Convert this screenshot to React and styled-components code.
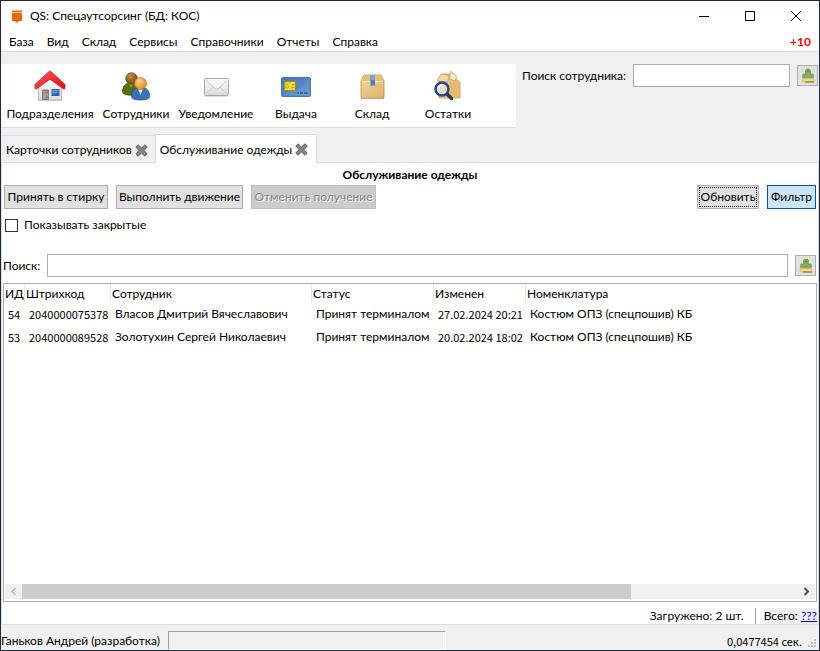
import React, { useState } from 'react';
import styled, { createGlobalStyle, css } from 'styled-components';

const menuItems = ['База', 'Вид', 'Склад', 'Сервисы', 'Справочники', 'Отчеты', 'Справка'];

const rows = [
  {
    id: 54,
    barcode: '2040000075378',
    employee: 'Власов Дмитрий Вячеславович',
    status: 'Принят терминалом',
    changed: '27.02.2024 20:21',
    item: 'Костюм ОПЗ (спецпошив) КБ',
  },
  {
    id: 53,
    barcode: '2040000089528',
    employee: 'Золотухин Сергей Николаевич',
    status: 'Принят терминалом',
    changed: '20.02.2024 18:02',
    item: 'Костюм ОПЗ (спецпошив) КБ',
  },
];

const HouseIcon = () => (
  <svg width="32" height="32" viewBox="0 0 32 32" aria-hidden="true">
    <defs>
      <linearGradient id="wall" x1="0" y1="0" x2="0" y2="1">
        <stop offset="0" stopColor="#fff" />
        <stop offset="1" stopColor="#dcdcdc" />
      </linearGradient>
      <linearGradient id="roof" x1="0" y1="0" x2="1" y2="1">
        <stop offset="0" stopColor="#f55" />
        <stop offset="1" stopColor="#d80f16" />
      </linearGradient>
    </defs>
    <ellipse cx="16" cy="30" rx="14" ry="1.5" fill="#0002" />
    <path d="M4.500 14 16 5l11.500 9v16h-23z" fill="url(#wall)" stroke="#aaa" strokeWidth=".8" />
    <path d="M8.500 20h6v9.500h-6z" fill="#8a8c85" stroke="#6c6e68" strokeWidth=".8" />
    <path d="M9.500 21h2v8h-2z" fill="#a5a7a0" />
    <circle cx="13.500" cy="25" r=".9" fill="#ddb94b" />
    <path d="M17 18.500h9v8h-9z" fill="#e8eaed" />
    <path d="M17.500 19h8v7h-8z" fill="#2f62a8" />
    <path d="M18.500 20h6v2.500l-6 2z" fill="#5b8fd0" />
    <path
      d="M16 1.300c.6 0 1 .2 1.400.6L30.600 14c.8.8.5 3 .2 4.500-.2.900-1 .7-1.600.2L16 9.200 2.800 18.700c-.6.5-1.400.7-1.600-.2-.3-1.500-.6-3.700.2-4.500L14.600 1.900c.4-.4.8-.6 1.400-.6z"
      fill="url(#roof)"
      stroke="#c4161c"
      strokeWidth=".7"
    />
  </svg>
);

const UsersIcon = () => (
  <svg width="32" height="32" viewBox="0 0 32 32" aria-hidden="true">
    <defs>
      <radialGradient id="skinBack" cx=".4" cy=".3" r=".7">
        <stop offset="0" stopColor="#c58e45" />
        <stop offset="1" stopColor="#764708" />
      </radialGradient>
      <radialGradient id="skinFront" cx=".4" cy=".3" r=".7">
        <stop offset="0" stopColor="#ffd391" />
        <stop offset="1" stopColor="#e08a17" />
      </radialGradient>
    </defs>
    <path d="M2.500 22c0-6 2.500-9 8-9s8 3 8 9c0 2-3.500 3.200-8 3.200S2.500 24 2.500 22z" fill="#53700c" stroke="#405608" strokeWidth=".7" />
    <path d="M8.500 13.500 11 18l3-4.500z" fill="#85994f" />
    <circle cx="11.500" cy="8.500" r="5.800" fill="url(#skinBack)" stroke="#6b420c" strokeWidth=".7" />
    <path d="M11.500 26.500c0-6 2.500-9 9-9s9 3 9 9c0 2.500-3.500 3.500-9 3.500s-9-1-9-3.500z" fill="#3a72b8" stroke="#204a87" strokeWidth=".7" />
    <path d="m18 18.500 2.500 6.500 2.500-6.500z" fill="#eef3f8" />
    <circle cx="20.500" cy="13.500" r="6" fill="url(#skinFront)" stroke="#bd6d0c" strokeWidth=".7" />
  </svg>
);

const MailIcon = () => (
  <svg width="32" height="32" viewBox="0 0 32 32" aria-hidden="true">
    <defs>
      <linearGradient id="paper" x1="0" y1="0" x2="0" y2="1">
        <stop offset="0" stopColor="#fff" />
        <stop offset="1" stopColor="#d8dad6" />
      </linearGradient>
    </defs>
    <path d="M4.500 26h24" stroke="#0002" strokeWidth="2" />
    <rect x="4.500" y="8.500" width="24" height="17" rx="1" fill="url(#paper)" stroke="#a6a8a4" />
    <path d="m6 24 8-8m13 8-8-8" stroke="#c6c8c4" strokeWidth=".8" fill="none" />
    <path d="m5.500 10 8.500 8c1.600 1.400 3.400 1.400 5 0l8.500-8" stroke="#bbbdb9" strokeWidth=".8" fill="#f4f4f3" />
  </svg>
);

const CardIcon = () => (
  <svg width="32" height="32" viewBox="0 0 32 32" aria-hidden="true">
    <defs>
      <linearGradient id="card" x1="0" y1="0" x2="1" y2="1">
        <stop offset="0" stopColor="#4177b2" />
        <stop offset="1" stopColor="#6598ce" />
      </linearGradient>
    </defs>
    <rect x="1.500" y="7.500" width="29" height="19" rx="1.500" fill="url(#card)" stroke="#4a78ab" />
    <path d="M3 24c9-2 18-6 26-14v15H3z" fill="#fff1" />
    <rect x="4.500" y="11.500" width="11" height="9" rx="1" fill="#efd02f" stroke="#a88f1e" />
    <path d="M5 14.500h3m-3 3h4m2-3h4m-4 3h4" stroke="#c9a51c" strokeWidth=".8" />
    <path d="m8 20 5-8" stroke="#f8e67c" />
    <path d="M17 23h2m1 0h3m1 0h4" stroke="#1f3a5f" />
  </svg>
);

const BoxIcon = () => (
  <svg width="32" height="32" viewBox="0 0 32 32" aria-hidden="true">
    <defs>
      <linearGradient id="box" x1="0" y1="0" x2="1" y2="1">
        <stop offset="0" stopColor="#f5d79f" />
        <stop offset="1" stopColor="#dfb269" />
      </linearGradient>
    </defs>
    <path d="M5 28.500h23" stroke="#0003" strokeWidth="1.500" />
    <path d="M5 11 8 5h17l3 6v17H5z" fill="url(#box)" stroke="#b98b43" strokeWidth=".8" />
    <path d="M5.500 11h22L25 5.500H8z" fill="#e5bd7a" />
    <path d="M6 11.500h21" stroke="#fae9c8" />
    <path d="M14.500 5h4.500v11.500l-2.200-1.500-2.300 1.500z" fill="#4d7fbe" />
    <path d="M14.500 5h4.500v5h-4.500z" fill="#7ba5d8" />
  </svg>
);

const BoxSearchIcon = () => (
  <svg width="32" height="32" viewBox="0 0 32 32" aria-hidden="true">
    <path d="m7 10 3-6h9l6 6 3 2v16H7z" fill="#e9c487" stroke="#c79a55" strokeWidth=".8" />
    <path d="m5 11 4-7 8 1.500L15.500 12z" fill="#f3d7a6" stroke="#c79a55" strokeWidth=".7" />
    <path d="m17.500 9 .8-8 6.200 5-1 5z" fill="#f8e7c8" stroke="#c79a55" strokeWidth=".7" />
    <path d="m18 12 8-1 1.600 2v14.600H18z" fill="#e3b973" />
    <path d="m15 24 4.500 4.500" stroke="#333b48" strokeWidth="3.500" strokeLinecap="round" />
    <circle cx="10" cy="19" r="6.500" fill="#e9dccb" stroke="#27468f" strokeWidth="2.500" />
    <path d="M6.300 18.500c.5-2.300 2-3.500 4.200-3.500" stroke="#fff" strokeWidth="1.500" fill="none" />
  </svg>
);

const BrushIcon = () => (
  <svg width="16" height="16" viewBox="0 0 16 16" aria-hidden="true">
    <path d="M5.500 3c0-1.300 1-1.800 2.500-1.800s2.500.5 2.500 1.800L10 6h2c1 0 1.500.5 1.500 1.500V8.500h-11V7.500C2.500 6.500 3 6 4 6h2z" fill="#83b548" stroke="#659a34" strokeWidth=".8" />
    <circle cx="8" cy="3.400" r=".8" fill="#40691d" />
    <path d="M2.200 8h11.600v2.500H2.200z" fill="#929a8c" />
    <path d="M2.500 10.500h11.200l.3 3.500H2z" fill="#ecdc7c" stroke="#cdb65c" strokeWidth=".6" />
    <path d="M5 14h9" stroke="#7d6529" />
  </svg>
);

const CrossIcon = () => (
  <svg width="13" height="13" viewBox="0 0 13 13" aria-hidden="true">
    <path
      d="M3 .8 6.500 4 10 .8 12.200 3 9 6.500l3.200 3.500L10 12.200 6.500 9 3 12.200.8 10 4 6.500.8 3z"
      fill="#858585"
      stroke="#5f5f5f"
      strokeLinejoin="round"
    />
  </svg>
);

const tools = [
  { label: 'Подразделения', Icon: HouseIcon, width: 96 },
  { label: 'Сотрудники', Icon: UsersIcon, width: 76 },
  { label: 'Уведомление', Icon: MailIcon, width: 84 },
  { label: 'Выдача', Icon: CardIcon, width: 76 },
  { label: 'Склад', Icon: BoxIcon, width: 76 },
  { label: 'Остатки', Icon: BoxSearchIcon, width: 76 },
];

const App = () => {
  const [employee, setEmployee] = useState('');
  const [search, setSearch] = useState('');
  const [showClosed, setShowClosed] = useState(false);

  return (
    <Window>
      <GlobalStyle />
      <TitleBar>
        <svg width="12" height="13" viewBox="0 0 12 13" aria-hidden="true">
          <path d="M1 .5h10V2H1zM1 2.800h10V10c0 .6-.3 1-1 1H8l-2 2-2-2H2c-.7 0-1-.4-1-1z" fill="#ec6608" />
        </svg>
        <h1>QS: Спецаутсорсинг (БД: КОС)</h1>
        <WindowBtn aria-label="Свернуть">
          <svg width="12" height="12" viewBox="0 0 12 12">
            <path d="M1 6.500h10" stroke="#000" />
          </svg>
        </WindowBtn>
        <WindowBtn aria-label="Развернуть">
          <svg width="12" height="12" viewBox="0 0 12 12">
            <path d="M1.500 1.500h9v9h-9z" stroke="#000" fill="none" />
          </svg>
        </WindowBtn>
        <WindowBtn aria-label="Закрыть">
          <svg width="12" height="12" viewBox="0 0 12 12">
            <path d="m1 1 10 10M11 1 1 11" stroke="#000" />
          </svg>
        </WindowBtn>
      </TitleBar>

      <MenuBar>
        {menuItems.map(name => (
          <button key={name}>{name}</button>
        ))}
        <Counter>+10</Counter>
      </MenuBar>

      <TopArea>
        <ToolBar>
          {tools.map(({ label, Icon, width }) => (
            <ToolBtn key={label} $width={width}>
              <Icon />
              {label}
            </ToolBtn>
          ))}
        </ToolBar>
        <EmployeeSearch>
          <label htmlFor="employee">Поиск сотрудника:</label>
          <TextInput id="employee" value={employee} onChange={e => setEmployee(e.target.value)} />
          <IconBtn aria-label="Очистить поиск сотрудника" onClick={() => setEmployee('')}>
            <BrushIcon />
          </IconBtn>
        </EmployeeSearch>
      </TopArea>

      <Tabs>
        <Tab>
          <button>Карточки сотрудников</button>
          <button aria-label="Закрыть вкладку">
            <CrossIcon />
          </button>
        </Tab>
        <Tab $active>
          <button>Обслуживание одежды</button>
          <button aria-label="Закрыть вкладку">
            <CrossIcon />
          </button>
        </Tab>
      </Tabs>

      <Page>
        <h2>Обслуживание одежды</h2>
        <Actions>
          <Btn $width={104}>Принять в стирку</Btn>
          <Btn $width={127}>Выполнить движение</Btn>
          <Btn $width={125} disabled>
            Отменить получение
          </Btn>
          <Spacer />
          <Btn $width={62} $focused>
            Обновить
          </Btn>
          <Btn $width={49} $pressed>
            Фильтр
          </Btn>
        </Actions>
        <CheckLabel>
          <input type="checkbox" checked={showClosed} onChange={e => setShowClosed(e.target.checked)} />
          Показывать закрытые
        </CheckLabel>
        <SearchRow>
          <label htmlFor="search">Поиск:</label>
          <TextInput id="search" value={search} onChange={e => setSearch(e.target.value)} />
          <IconBtn aria-label="Очистить поиск" onClick={() => setSearch('')}>
            <BrushIcon />
          </IconBtn>
        </SearchRow>

        <ListBox>
          <Table>
            <colgroup>
              <Col $width={21} />
              <Col $width={86} />
              <Col $width={201} />
              <Col $width={122} />
              <Col $width={92} />
              <col />
            </colgroup>
            <thead>
              <tr>
                <th>ИД</th>
                <th>Штрихкод</th>
                <th>Сотрудник</th>
                <th>Статус</th>
                <th>Изменен</th>
                <th>Номенклатура</th>
              </tr>
            </thead>
            <tbody>
              {rows.map(row => (
                <tr key={row.id}>
                  <NumCell>{row.id}</NumCell>
                  <NumCell>{row.barcode}</NumCell>
                  <td>{row.employee}</td>
                  <td>{row.status}</td>
                  <NumCell>{row.changed}</NumCell>
                  <td>{row.item}</td>
                </tr>
              ))}
            </tbody>
          </Table>
          <ScrollBar>
            <button aria-label="Влево" disabled>
              <svg width="7" height="9" viewBox="0 0 7 9">
                <path d="M5.500 1 2 4.500 5.500 8" stroke="#b5b5b5" strokeWidth="1.500" fill="none" />
              </svg>
            </button>
            <Track>
              <Thumb />
            </Track>
            <button aria-label="Вправо">
              <svg width="7" height="9" viewBox="0 0 7 9">
                <path d="M1.500 1 5 4.500 1.500 8" stroke="#505050" strokeWidth="2" fill="none" />
              </svg>
            </button>
          </ScrollBar>
        </ListBox>

        <Totals>
          <span>Загружено: 2 шт.</span>
          <Total>
            Всего: <a href="#total">???</a>
          </Total>
        </Totals>
      </Page>

      <StatusBar>
        <span>Ганьков Андрей (разработка)</span>
        <StatusPanel />
        <Elapsed>0,0477454 сек.</Elapsed>
        <svg width="8" height="8" viewBox="0 0 8 8" aria-hidden="true">
          <path d="M6 0h2v2H6zM3 3h2v2H3zM6 3h2v2H6zM0 6h2v2H0zM3 6h2v2H3zM6 6h2v2H6z" fill="#bfbfbf" />
        </svg>
      </StatusBar>
    </Window>
  );
};

const GlobalStyle = createGlobalStyle`
  * {
    box-sizing: border-box;
  }

  body {
    margin: 0;
    color: #000;
    background: #f0f0f0;
    font: 12px/16px Lato, 'Open Sans', sans-serif;
  }

  h1, h2 {
    margin: 0;
    font-size: 12px;
  }

  button, input {
    margin: 0;
    padding: 0;
    border: 0;
    border-radius: 0;
    color: inherit;
    background: none;
    font: inherit;
    white-space: nowrap;
  }

  svg {
    display: block;
    flex: none;
  }
`;

const numberFont = css`
  font-family: 'Noto Sans CJK SC', 'Open Sans', sans-serif;
  font-size: 11px;
`;

const Window = styled.div`
  display: flex;
  flex-direction: column;
  min-height: 100vh;
  border: 1px solid #1b2a41;
  white-space: nowrap;
`;

const TitleBar = styled.header`
  display: flex;
  align-items: center;
  height: 30px;
  padding-left: 10px;
  background: #fff;

  h1 {
    flex: 1;
    margin-left: 7px;
    font-weight: 400;
  }
`;

const WindowBtn = styled.button`
  display: flex;
  align-items: center;
  justify-content: center;
  width: 46px;
  height: 30px;
`;

const MenuBar = styled.nav`
  display: flex;
  align-items: center;
  gap: 13px;
  height: 21px;
  padding: 2px 8px 0;
  border-bottom: 1px solid #dcdcdc;
  background: #fff;
`;

const Counter = styled.span`
  margin-left: auto;
  color: #f00;
  font-weight: 700;
`;

const TopArea = styled.section`
  display: flex;
  padding-top: 12px;
`;

const ToolBar = styled.div`
  display: flex;
  flex: none;
  width: 515px;
  height: 64px;
  padding: 6px 0 0 1px;
  border-bottom: 1px solid #dcdcdc;
  background: #fff;
`;

const ToolBtn = styled.button`
  display: flex;
  flex-direction: column;
  align-items: center;
  gap: 4px;
  width: ${({ $width }) => $width}px;
`;

const fieldRow = css`
  display: flex;
  align-items: center;
  gap: 7px;

  input {
    flex: 1;
    min-width: 0;
  }
`;

const EmployeeSearch = styled.div`
  ${fieldRow}
  flex: 1;
  min-width: 0;
  height: 23px;
  padding: 0 1px 0 6px;
`;

const TextInput = styled.input`
  height: 23px;
  padding: 0 4px;
  border: 1px solid #abadb3;
  background: #fff;
`;

const IconBtn = styled.button`
  display: flex;
  flex: none;
  align-items: center;
  justify-content: center;
  width: 21px;
  height: 21px;
  border: 1px solid #adadad;
  background: #e1e1e1;
`;

const Tabs = styled.div`
  display: flex;
  align-items: flex-end;
  margin-top: 6px;
  border-bottom: 1px solid #dcdcdc;
`;

const Tab = styled.div`
  display: flex;
  align-items: center;
  gap: 3px;
  height: 27px;
  padding: 2px 7px 0 5px;
  border-top: 1px solid #dcdcdc;

  ${({ $active }) =>
    $active &&
    css`
      height: 29px;
      margin-bottom: -1px;
      padding: 1px 8px 0 4px;
      border: 1px solid #dcdcdc;
      border-bottom: 0;
      background: #fff;
    `}
`;

const Page = styled.main`
  display: flex;
  flex: 1;
  flex-direction: column;
  padding: 4px 1px 0;
  border: 1px solid #dcdcdc;
  border-top: 0;
  background: #fff;

  h2 {
    text-align: center;
  }
`;

const Actions = styled.div`
  display: flex;
  gap: 8px;
  margin-top: 2px;
  padding: 0 1px;
`;

const Spacer = styled.div`
  flex: 1;
`;

const Btn = styled.button`
  width: ${({ $width }) => $width}px;
  height: 24px;
  border: 1px solid #adadad;
  background: #e1e1e1;

  &:disabled {
    border-color: #bfbfbf;
    color: #838383;
    background: #ccc;
    text-shadow: 1px 1px #fff;
  }

  ${({ $focused }) =>
    $focused &&
    css`
      outline: 1px dotted #000;
      outline-offset: -3px;
    `}

  ${({ $pressed }) =>
    $pressed &&
    css`
      border-color: #005499;
      background: #cce4f7;
    `}
`;

const CheckLabel = styled.label`
  display: flex;
  align-items: center;
  align-self: flex-start;
  gap: 6px;
  margin: 8px 0 0 2px;

  input {
    width: 13px;
    height: 13px;
    border: 1px solid #333;
    background: #fff;
    appearance: none;
  }

  input:checked {
    background: #333;
    box-shadow: inset 0 0 0 2px #fff;
  }
`;

const SearchRow = styled.div`
  ${fieldRow}
  margin-top: 21px;
  padding-right: 1px;
`;

const ListBox = styled.section`
  display: flex;
  flex: 1;
  flex-direction: column;
  justify-content: space-between;
  margin-top: 6px;
  padding-bottom: 2px;
  border: 1px solid #abadb3;
`;

const Table = styled.table`
  width: 100%;
  border-spacing: 0;
  table-layout: fixed;

  th,
  td {
    height: 23px;
    padding: 0 0 0 4px;
    text-align: left;
  }

  th {
    height: 18px;
    padding: 2px 0 0 1px;
    border-right: 1px solid #e5e5e5;
    font-weight: 400;
  }

  th:last-child {
    border-right: 0;
  }
`;

const Col = styled.col`
  width: ${({ $width }) => $width}px;
`;

const NumCell = styled.td`
  ${numberFont}
`;

const ScrollBar = styled.div`
  display: flex;
  height: 15px;
  margin: 0 1px;
  background: #f0f0f0;

  button {
    display: flex;
    align-items: center;
    justify-content: center;
    width: 17px;
  }
`;

const Track = styled.div`
  flex: 1;
`;

const Thumb = styled.div`
  width: 78.5%;
  height: 100%;
  background: #cdcdcd;
`;

const Totals = styled.footer`
  display: flex;
  align-items: center;
  justify-content: flex-end;
  height: 22px;
  padding-top: 6px;
`;

const Total = styled.span`
  margin-left: 11px;
  padding-left: 8px;
  border-left: 1px solid #a0a0a0;
  background: #f0f0f0;
  background-clip: content-box;

  a {
    color: #00f;
  }
`;

const StatusBar = styled.footer`
  display: flex;
  align-items: flex-end;
  height: 25px;
  padding-right: 3px;
  line-height: 18px;

  svg {
    margin: 0 0 3px 6px;
  }
`;

const StatusPanel = styled.div`
  width: 278px;
  height: 19px;
  margin: 0 auto 0 8px;
  border: 1px solid #a0a0a0;
  border-right-color: #fff;
  border-bottom-color: #fff;
`;

const Elapsed = styled.span`
  ${numberFont}
`;

export default App;
